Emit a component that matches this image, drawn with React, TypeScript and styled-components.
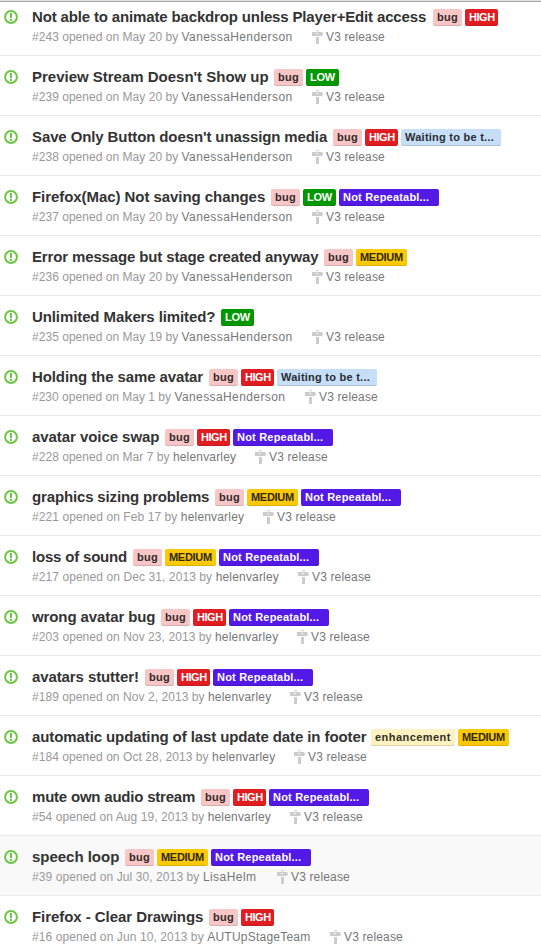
import React from "react";
import styled, { createGlobalStyle } from "styled-components";

const GlobalStyle = createGlobalStyle`
  * { box-sizing: border-box; }
  body {
    margin: 0;
    background: #fff;
    font-family: "Liberation Sans", Arial, sans-serif;
    overflow: hidden;
  }
`;

type Kind = "bug" | "high" | "low" | "medium" | "waiting" | "unrepeatable" | "enhancement";

const kinds: Record<Kind, { text: string; width: number; bg: string; fg: string; tracking: number }> = {
  bug: { text: "bug", width: 29, bg: "#f7c6c7", fg: "#332829", tracking: 0.3 },
  high: { text: "HIGH", width: 33, bg: "#e11d21", fg: "#fff", tracking: -0.45 },
  low: { text: "LOW", width: 33, bg: "#009800", fg: "#fff", tracking: -0.25 },
  medium: { text: "MEDIUM", width: 51, bg: "#fbca04", fg: "#332900", tracking: -0.3 },
  waiting: { text: "Waiting to be t...", width: 100, bg: "#c7def8", fg: "#282d33", tracking: 0.25 },
  unrepeatable: { text: "Not Repeatabl...", width: 100, bg: "#5319e7", fg: "#fff", tracking: 0.2 },
  enhancement: { text: "enhancement", width: 84, bg: "#fef2c0", fg: "#333026", tracking: 0.45 },
};

interface Person {
  name: string;
  tracking: number;
}

interface Issue {
  title: string;
  titleWidth: number;
  tracking: number;
  id: number;
  date: string;
  author: Person;
  metaWidth: number;
  metaTracking: number;
  labels: Kind[];
  active?: boolean;
}

const vanessa: Person = { name: "VanessaHenderson", tracking: 0.4 };
const helen: Person = { name: "helenvarley", tracking: 0.18 };
const lisa: Person = { name: "LisaHelm", tracking: 0.45 };
const team: Person = { name: "AUTUpStageTeam", tracking: 0.23 };

const issues: Issue[] = [
  { title: "Not able to animate backdrop unless Player+Edit access", titleWidth: 395, tracking: -0.15, id: 243, date: "May 20", author: vanessa, metaWidth: 260, metaTracking: 0.03, labels: ["bug", "high"] },
  { title: "Preview Stream Doesn't Show up", titleWidth: 236, tracking: -0.01, id: 239, date: "May 20", author: vanessa, metaWidth: 260, metaTracking: 0.03, labels: ["bug", "low"] },
  { title: "Save Only Button doesn't unassign media", titleWidth: 295, tracking: -0.11, id: 238, date: "May 20", author: vanessa, metaWidth: 260, metaTracking: 0.03, labels: ["bug", "high", "waiting"] },
  { title: "Firefox(Mac) Not saving changes", titleWidth: 233, tracking: -0.06, id: 237, date: "May 20", author: vanessa, metaWidth: 260, metaTracking: 0.03, labels: ["bug", "low", "unrepeatable"] },
  { title: "Error message but stage created anyway", titleWidth: 286, tracking: -0.14, id: 236, date: "May 20", author: vanessa, metaWidth: 260, metaTracking: 0.03, labels: ["bug", "medium"] },
  { title: "Unlimited Makers limited?", titleWidth: 183, tracking: -0.1, id: 235, date: "May 19", author: vanessa, metaWidth: 260, metaTracking: 0.03, labels: ["low"] },
  { title: "Holding the same avatar", titleWidth: 171, tracking: -0.1, id: 230, date: "May 1", author: vanessa, metaWidth: 253, metaTracking: 0.01, labels: ["bug", "high", "waiting"] },
  { title: "avatar voice swap", titleWidth: 127, tracking: -0.06, id: 228, date: "Mar 7", author: helen, metaWidth: 203, metaTracking: 0.03, labels: ["bug", "high", "unrepeatable"] },
  { title: "graphics sizing problems", titleWidth: 177, tracking: -0.15, id: 221, date: "Feb 17", author: helen, metaWidth: 211, metaTracking: 0.08, labels: ["bug", "medium", "unrepeatable"] },
  { title: "loss of sound", titleWidth: 95, tracking: -0.19, id: 217, date: "Dec 31, 2013", author: helen, metaWidth: 246, metaTracking: 0.09, labels: ["bug", "medium", "unrepeatable"] },
  { title: "wrong avatar bug", titleWidth: 123, tracking: -0.1, id: 203, date: "Nov 23, 2013", author: helen, metaWidth: 245, metaTracking: 0.07, labels: ["bug", "high", "unrepeatable"] },
  { title: "avatars stutter!", titleWidth: 107, tracking: -0.1, id: 189, date: "Nov 2, 2013", author: helen, metaWidth: 238, metaTracking: 0.06, labels: ["bug", "high", "unrepeatable"] },
  { title: "automatic updating of last update date in footer", titleWidth: 333, tracking: -0.1, id: 184, date: "Oct 28, 2013", author: helen, metaWidth: 242, metaTracking: 0.06, labels: ["enhancement", "medium"] },
  { title: "mute own audio stream", titleWidth: 163, tracking: -0.21, id: 54, date: "Aug 19, 2013", author: helen, metaWidth: 238, metaTracking: 0.07, labels: ["bug", "high", "unrepeatable"] },
  { title: "speech loop", titleWidth: 87, tracking: -0.02, id: 39, date: "Jul 30, 2013", author: lisa, metaWidth: 225, metaTracking: 0.09, labels: ["bug", "medium", "unrepeatable"], active: true },
  { title: "Firefox - Clear Drawings", titleWidth: 171, tracking: -0.05, id: 16, date: "Jun 10, 2013", author: team, metaWidth: 278, metaTracking: 0.1, labels: ["bug", "high"] },
];

const List = styled.main`
  height: 949px;
  overflow: hidden;
  border-top: 1px solid #e3e3e3;
`;

const Row = styled.article<{ $active?: boolean }>`
  display: flex;
  height: 60px;
  padding: 13px 0 0 4px;
  border-bottom: 1px solid #ebebeb;
  background: ${(p) => (p.$active ? "#f9f9f9" : "#fff")};

  &:first-child {
    height: 55px;
    padding-top: 7px;
    border-top: 1px solid #a5a5a5;
  }
`;

const OpenIcon = styled.svg`
  flex: none;
  width: 14px;
  height: 14px;
  margin: 1px 14px 0 0;
`;

const Content = styled.div`
  min-width: 0;
`;

const Heading = styled.div`
  display: flex;
  height: 18px;
  gap: 3px;
`;

const Title = styled.h2<{ $width: number; $tracking: number }>`
  flex: none;
  width: ${(p) => p.$width}px;
  margin: -1px 3px 0 0;
  color: #333;
  font-size: 15px;
  line-height: 18px;
  letter-spacing: ${(p) => p.$tracking}px;
  white-space: nowrap;
`;

const Label = styled.span<{ $kind: Kind }>`
  flex: none;
  width: ${(p) => kinds[p.$kind].width}px;
  height: 17px;
  padding: 0 4px;
  border-radius: 2px;
  background: ${(p) => kinds[p.$kind].bg};
  box-shadow: inset 0 -1px 0 rgba(0, 0, 0, 0.12);
  color: ${(p) => kinds[p.$kind].fg};
  font-size: 11px;
  font-weight: bold;
  line-height: 16px;
  letter-spacing: ${(p) => kinds[p.$kind].tracking}px;
  white-space: nowrap;
`;

const Meta = styled.div`
  display: flex;
  height: 16px;
  margin-top: 2px;
  color: #999;
  font-size: 12px;
  line-height: 16px;
  white-space: nowrap;
`;

const Opened = styled.span<{ $width: number; $tracking: number }>`
  flex: none;
  width: ${(p) => p.$width}px;
  margin-right: 20px;
  letter-spacing: ${(p) => p.$tracking}px;
`;

const Author = styled.span<{ $tracking: number }>`
  color: #777;
  letter-spacing: ${(p) => p.$tracking}px;
`;

const Milestone = styled.span`
  display: flex;
  gap: 3px;
  color: #777;
  letter-spacing: 0.15px;
`;

const MilestoneIcon = styled.svg`
  width: 11px;
  height: 14px;
  margin-top: 1px;
`;

export default function App() {
  return (
    <>
      <GlobalStyle />
      <List>
        {issues.map((issue) => (
          <Row key={issue.id} $active={issue.active}>
            <OpenIcon viewBox="0 0 14 14">
              <circle cx="7" cy="7" r="5.9" fill="none" stroke="#6cc644" strokeWidth="2" />
              <path d="M6 3h2v5H6zM6 9h2v2H6z" fill="#6cc644" />
            </OpenIcon>
            <Content>
              <Heading>
                <Title $width={issue.titleWidth} $tracking={issue.tracking}>{issue.title}</Title>
                {issue.labels.map((kind) => (
                  <Label key={kind} $kind={kind}>{kinds[kind].text}</Label>
                ))}
              </Heading>
              <Meta>
                <Opened $width={issue.metaWidth} $tracking={issue.metaTracking}>
                  #{issue.id} opened on {issue.date} by{" "}
                  <Author $tracking={issue.author.tracking}>{issue.author.name}</Author>
                </Opened>
                <Milestone>
                  <MilestoneIcon viewBox="0 0 11 14">
                    <path d="M4 0.3h3v1H4zM0 2h10l1 2-1 2H0zM4 7h3v7H4z" fill="#ccc" />
                    <path d="M4 3h2v1H4z" fill="#f4f4f4" />
                  </MilestoneIcon>
                  V3 release
                </Milestone>
              </Meta>
            </Content>
          </Row>
        ))}
      </List>
    </>
  );
}
